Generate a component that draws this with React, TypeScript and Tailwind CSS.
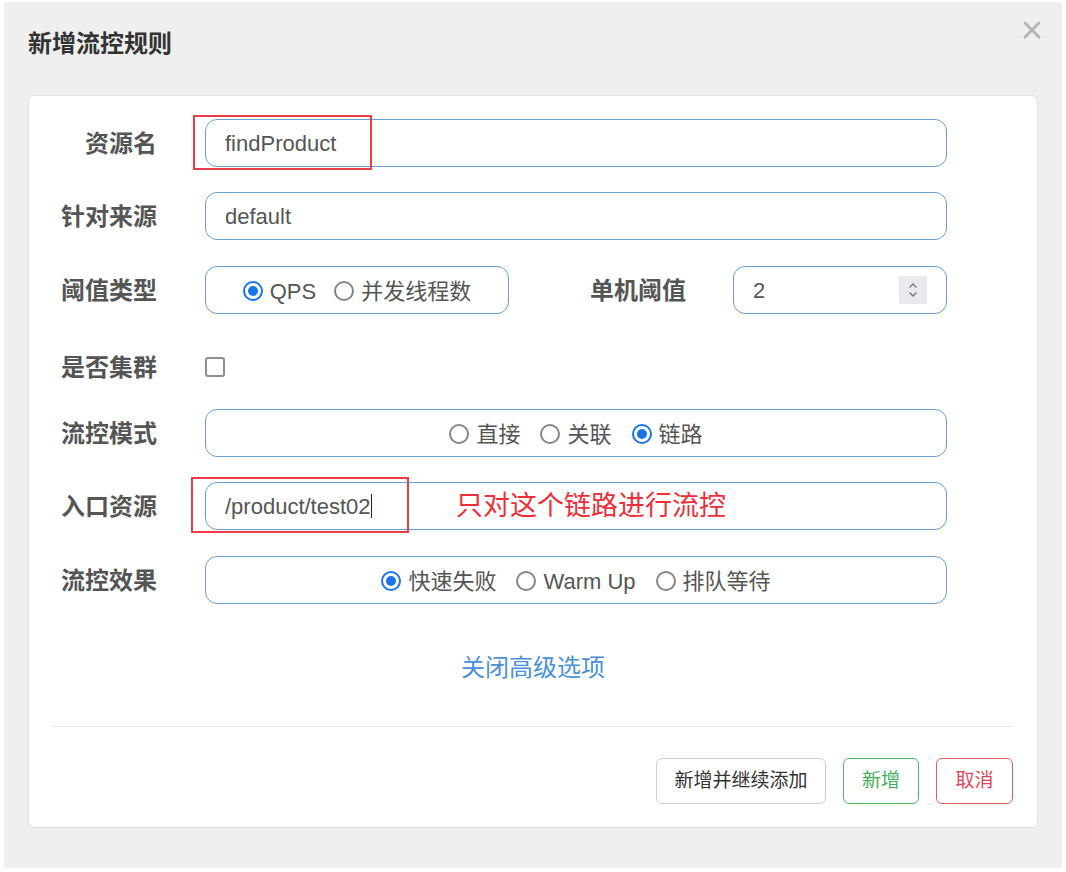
import React from 'react';

const FONT = { fontFamily: '"Liberation Sans", "Noto Sans CJK SC", sans-serif' };

function Radio({ checked, label }: { checked?: boolean; label: string }) {
  return (
    <span className="flex items-center gap-[7px] pt-[2px]">
      {checked ? (
        <span className="w-[20px] h-[20px] rounded-full border-2 border-[#1a73e8] flex items-center justify-center">
          <span className="w-[10px] h-[10px] rounded-full bg-[#1a73e8]" />
        </span>
      ) : (
        <span className="w-[20px] h-[20px] rounded-full border-2 border-[#858585] bg-white" />
      )}
      <span className="text-[22px] text-[#555]">{label}</span>
    </span>
  );
}

function Row({ label, children, className = '' }: { label: string; children: React.ReactNode; className?: string }) {
  return (
    <div className={`flex items-center h-[48px] ${className}`}>
      <label className="w-[104px] shrink-0 text-right text-[24px] font-bold text-[#555] whitespace-nowrap pt-[2px]">{label}</label>
      <div className="ml-[48px] flex-1 flex items-center h-full">{children}</div>
    </div>
  );
}

const box = 'h-[48px] rounded-[12px] border-[1.5px] border-[#6a9ed2] bg-white';

export default function App() {
  return (
    <div className="min-h-screen bg-white px-[4px] py-[2px]" style={FONT}>
      <div className="bg-[#efefef] rounded-[3px] pb-[40px]">
        {/* Header */}
        <div className="relative h-[93px] px-[24px] pt-[26px]">
          <h3 className="text-[24px] font-bold text-[#333] leading-[32px]">新增流控规则</h3>
          <button className="absolute right-[20px] top-[18px] w-[20px] h-[20px]">
            <svg viewBox="0 0 20 20" width="20" height="20">
              <path d="M3 3 L17 17 M17 3 L3 17" stroke="#b5b5b5" strokeWidth="3" strokeLinecap="round" />
            </svg>
          </button>
        </div>

        {/* Body card */}
        <div className="mx-[24px] bg-white rounded-[6px] border border-[#e0e0e0] px-[24px] pt-[23px] pb-[23px]">
          <div className="pr-[66px]">
            <Row label="资源名">
              <div className="relative w-full">
                <div className={`${box} w-full flex items-center px-[19px] text-[22px] text-[#555]`}>findProduct</div>
                <div className="absolute left-[-12px] top-[-4px] w-[179px] h-[55px] border-2 border-[#ea3d47]" />
              </div>
            </Row>

            <Row label="针对来源" className="mt-[25px]">
              <div className={`${box} w-full flex items-center px-[19px] text-[22px] text-[#555]`}>default</div>
            </Row>

            <Row label="阈值类型" className="mt-[26px]">
              <div className={`${box} w-[304px] shrink-0 flex items-center justify-center gap-[18px]`}>
                <Radio checked label="QPS" />
                <Radio label="并发线程数" />
              </div>
              <label className="ml-[81px] w-[100px] shrink-0 whitespace-nowrap text-[24px] font-bold text-[#555] pt-[2px]">单机阈值</label>
              <div className={`${box} ml-[43px] flex-1 flex items-center justify-between pl-[19px] pr-[19px] text-[22px] text-[#555]`}>
                <span>2</span>
                <span className="w-[28px] h-[28px] bg-[#e9e9ee] flex flex-col items-center justify-center">
                  <svg viewBox="0 0 14 20" width="12" height="20">
                    <path d="M3 7 L7 3 L11 7 M3 13 L7 17 L11 13" fill="none" stroke="#777" strokeWidth="1.5" />
                  </svg>
                </span>
              </div>
            </Row>

            <Row label="是否集群" className="mt-[29px]">
              <span className="w-[20px] h-[20px] rounded-[3px] border-2 border-[#8d8d98] bg-white" />
            </Row>

            <Row label="流控模式" className="mt-[18px]">
              <div className={`${box} w-full flex items-center justify-center gap-[20px]`}>
                <Radio label="直接" />
                <Radio label="关联" />
                <Radio checked label="链路" />
              </div>
            </Row>

            <Row label="入口资源" className="mt-[25px]">
              <div className="relative w-full">
                <div className={`${box} w-full flex items-center px-[19px] text-[22px] text-[#555]`}>
                  <span>/product/test02</span>
                  <span className="w-[1.5px] h-[24px] bg-[#222]" />
                </div>
                <div className="absolute left-[-14px] top-[-5px] w-[218px] h-[56px] border-2 border-[#ea3d47]" />
                <span className="absolute left-[251px] top-1/2 -translate-y-1/2 text-[27px] text-[#ee2f3a] leading-none">
                  只对这个链路进行流控
                </span>
              </div>
            </Row>

            <Row label="流控效果" className="mt-[26px]">
              <div className={`${box} w-full flex items-center justify-center gap-[20px]`}>
                <Radio checked label="快速失败" />
                <Radio label="Warm Up" />
                <Radio label="排队等待" />
              </div>
            </Row>
          </div>

          <div className="mt-[48px] text-center">
            <a className="text-[24px] leading-[32px] text-[#4a90d6]">关闭高级选项</a>
          </div>

          <div className="mt-[42px] h-px bg-[#e5e5e5]" />

          <div className="mt-[31px] flex justify-end gap-[17px]">
            <button className="w-[170px] h-[46px] rounded-[6px] border border-[#cfcfcf] bg-white text-[19px] text-[#333]">新增并继续添加</button>
            <button className="w-[76px] h-[46px] rounded-[6px] border-[1.5px] border-[#52b86a] bg-white text-[19px] text-[#44ad5a]">新增</button>
            <button className="w-[77px] h-[46px] rounded-[6px] border-[1.5px] border-[#e05a66] bg-white text-[19px] text-[#e0475a]">取消</button>
          </div>
        </div>
      </div>
    </div>
  );
}
